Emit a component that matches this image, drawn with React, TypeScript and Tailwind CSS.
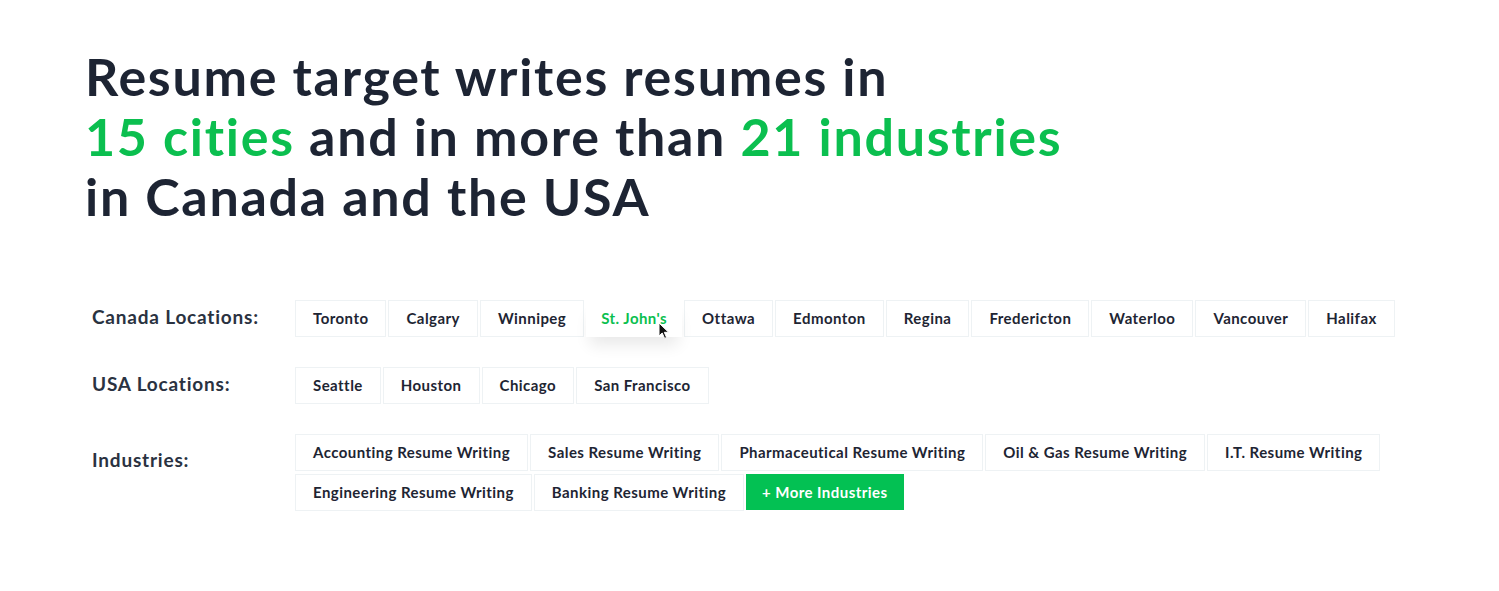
import React from "react";

const CANADA = [
  "Toronto",
  "Calgary",
  "Winnipeg",
  "St. John's",
  "Ottawa",
  "Edmonton",
  "Regina",
  "Fredericton",
  "Waterloo",
  "Vancouver",
  "Halifax",
];

const USA = ["Seattle", "Houston", "Chicago", "San Francisco"];

const INDUSTRIES = [
  "Accounting Resume Writing",
  "Sales Resume Writing",
  "Pharmaceutical Resume Writing",
  "Oil & Gas Resume Writing",
  "I.T. Resume Writing",
  "Engineering Resume Writing",
  "Banking Resume Writing",
];

const ACTIVE = "St. John's";

function Cursor() {
  return (
    <svg
      className="absolute right-[12px] top-[22px] pointer-events-none"
      width="12"
      height="18"
      viewBox="0 0 12 18"
    >
      <path
        d="M1 1 L1 14 L4.2 11 L6.6 16.4 L8.6 15.5 L6.3 10.3 L10.6 10.3 Z"
        fill="#111"
        stroke="#fff"
        strokeWidth="1"
        strokeLinejoin="round"
      />
    </svg>
  );
}

function Chip({ label }: { label: string }) {
  const active = label === ACTIVE;
  if (active) {
    return (
      <span className="relative flex h-[37px] items-center bg-white px-[15px] text-[15px] font-bold tracking-[0.45px] text-[#0bbf4f] shadow-[0_12px_16px_-4px_rgba(0,0,0,0.09)]">
        {label}
        <Cursor />
      </span>
    );
  }
  return (
    <span className="flex h-[37px] items-center border border-[#eef2f4] bg-white px-[17px] text-[15px] font-bold tracking-[0.45px] text-[#1e2533]">
      {label}
    </span>
  );
}

function Row({
  label,
  children,
  labelClass = "",
}: {
  label: string;
  children: React.ReactNode;
  labelClass?: string;
}) {
  return (
    <div className="flex items-start">
      <div
        className={
          "w-[210px] shrink-0 pl-[7px] pt-[3px] text-[19px] font-bold tracking-[0.8px] text-[#2a3241] " +
          labelClass
        }
      >
        {label}
      </div>
      <div className="flex flex-wrap gap-x-[2px] gap-y-[3px]">{children}</div>
    </div>
  );
}

export default function App() {
  return (
    <div
      className="min-h-[591px] w-full bg-white pl-[85px] pt-[46px]"
      style={{ fontFamily: "Lato, 'Noto Sans', sans-serif" }}
    >
      <h1 className="text-[52px] font-bold leading-[60px] tracking-[1.7px] text-[#1d2433]">
        Resume target writes resumes in
        <br />
        <span className="text-[#0bbf4f]">15 cities</span> and in more than{" "}
        <span className="text-[#0bbf4f]">21 industries</span>
        <br />
        in Canada and the USA
      </h1>

      <div className="mt-[74px] flex flex-col gap-[30px]">
        <Row label="Canada Locations:">
          {CANADA.map((c) => (
            <Chip key={c} label={c} />
          ))}
        </Row>
        <Row label="USA Locations:">
          {USA.map((c) => (
            <Chip key={c} label={c} />
          ))}
        </Row>
        <Row label="Industries:" labelClass="pt-[12px]">
          <div className="flex w-[1100px] flex-wrap gap-x-[2px] gap-y-[3px]">
            {INDUSTRIES.map((c) => (
              <Chip key={c} label={c} />
            ))}
            <button className="flex h-[36px] items-center bg-[#03c153] px-[16px] text-[15px] font-bold tracking-[0.45px] text-white">
              + More Industries
            </button>
          </div>
        </Row>
      </div>
    </div>
  );
}
